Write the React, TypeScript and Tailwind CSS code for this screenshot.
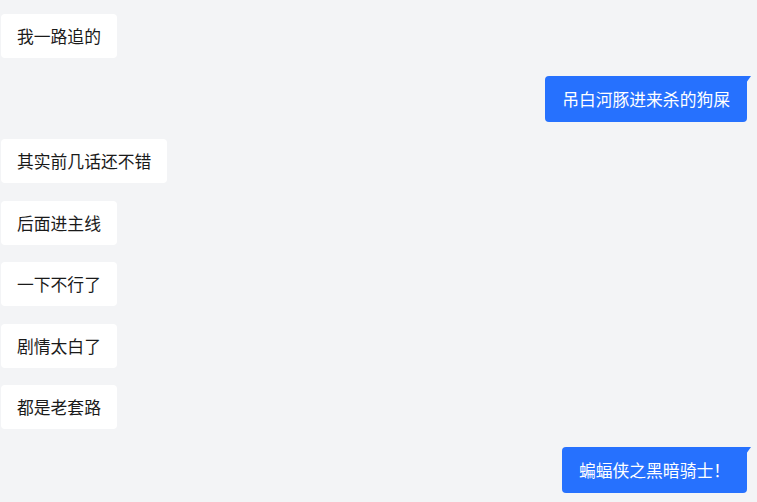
import React from "react";

type Msg = { text: string; mine?: boolean };

const messages: Msg[] = [
  { text: "我一路追的" },
  { text: "吊白河豚进来杀的狗屎", mine: true },
  { text: "其实前几话还不错" },
  { text: "后面进主线" },
  { text: "一下不行了" },
  { text: "剧情太白了" },
  { text: "都是老套路" },
  { text: "蝙蝠侠之黑暗骑士！", mine: true },
];

const Bubble = ({ text, mine }: Msg) => {
  if (mine) {
    return (
      <div className="flex justify-end">
        <div className="relative rounded-[4px] rounded-tr-none bg-[#2671fe] px-[17px] py-[11px] leading-6 text-white">
          {text}
          <svg
            className="absolute top-0 right-[-4px]"
            width="5"
            height="7"
            viewBox="0 0 5 7"
          >
            <polygon points="0,0 5,0 0,7" fill="#2671fe" />
          </svg>
        </div>
      </div>
    );
  }
  return (
    <div className="flex justify-start">
      <div className="rounded-[4px] bg-white px-4 py-[10px] leading-6 text-[#1a1a1a]">
        {text}
      </div>
    </div>
  );
};

export default function App() {
  return (
    <div
      className="min-h-[502px] w-full bg-[#f3f4f6] pt-[14px] pl-[1px] pr-[10px] text-[16.8px]"
      style={{ fontFamily: '"Noto Sans CJK SC", "Noto Sans", sans-serif' }}
    >
      <div className="flex flex-col gap-[17.5px]">
        {messages.map((m, i) => (
          <Bubble key={i} text={m.text} mine={m.mine} />
        ))}
      </div>
    </div>
  );
}
